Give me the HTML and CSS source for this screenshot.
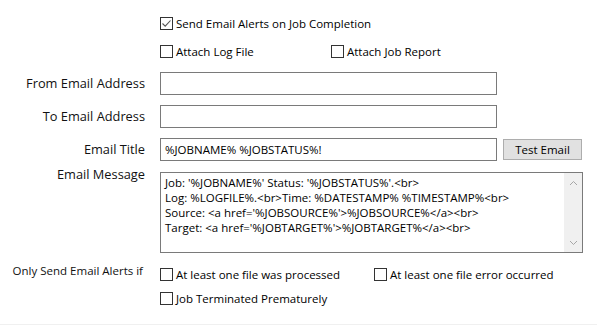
FILE: index.html
```html
<html>
<head>
  <meta charset="UTF-8">
  <link rel="stylesheet" href="styles.css">
</head>
<body>
<div id="panel">
  <div class="row r_send">
    <div class="label"></div>
    <div class="check"><span class="box"><svg width="11" height="11" viewBox="0 0 11 11"><path d="M1.5 5.5 L4.2 8.2 L9.5 2.5" fill="none" stroke="#555555" stroke-width="1.1"/></svg></span>Send Email Alerts on Job Completion</div>
  </div>

  <div class="row r_attach">
    <div class="label"></div>
    <div class="check w_log"><span class="box"></span>Attach Log File</div>
    <div class="check"><span class="box"></span>Attach Job Report</div>
  </div>

  <div class="row r_from">
    <div class="label">From Email Address</div>
    <div class="field"></div>
  </div>

  <div class="row r_to">
    <div class="label">To Email Address</div>
    <div class="field"></div>
  </div>

  <div class="row r_title">
    <div class="label">Email Title</div>
    <div class="field">%JOBNAME% %JOBSTATUS%!</div>
    <div class="button">Test Email</div>
  </div>

  <div class="row r_message">
    <div class="label">Email Message</div>
    <div class="memo">
      <div class="memo_text">
        <div>Job: '%JOBNAME%' Status: '%JOBSTATUS%'.&lt;br&gt;</div>
        <div>Log: %LOGFILE%.&lt;br&gt;Time: %DATESTAMP% %TIMESTAMP%&lt;br&gt;</div>
        <div>Source: &lt;a href='%JOBSOURCE%'&gt;%JOBSOURCE%&lt;/a&gt;&lt;br&gt;</div>
        <div>Target: &lt;a href='%JOBTARGET%'&gt;%JOBTARGET%&lt;/a&gt;&lt;br&gt;</div>
      </div>
      <div class="scrollbar">
        <svg width="9" height="6" viewBox="0 0 9 6"><path d="M1 5 L4.5 1.5 L8 5" fill="none" stroke="#a6a6a6" stroke-width="1"/></svg>
        <svg width="9" height="6" viewBox="0 0 9 6"><path d="M1 1 L4.5 4.5 L8 1" fill="none" stroke="#a6a6a6" stroke-width="1"/></svg>
      </div>
    </div>
  </div>

  <div class="row r_only">
    <div class="label small">Only Send Email Alerts if</div>
    <div class="check w_proc"><span class="box"></span>At least one file was processed</div>
    <div class="check"><span class="box"></span>At least one file error occurred</div>
  </div>

  <div class="row r_term">
    <div class="label"></div>
    <div class="check"><span class="box"></span>Job Terminated Prematurely</div>
  </div>
</div>
</body>
</html>
```

FILE: styles.css
```css
* {
    box-sizing: border-box;
    margin: 0;
    padding: 0;
}

body, html {
    width: 100%;
    height: 100%;
    background: #ffffff;
    color: #000000;
    font-family: 'Open Sans', sans-serif;
    font-size: 11.5px;
}

#panel {
    height: 325px;
    padding-top: 12px;
    border-bottom: 1px solid #f0f0f0;
}

.row {
    display: flex;
    align-items: center;
    height: 22px;
}

.label {
    width: 145px;
    margin-right: 15px;
    text-align: right;
    font-size: 12.8px;
    color: #111111;
    flex-shrink: 0;
}

.label.small {
    font-size: 11.5px;
    margin-right: 17px;
    width: 143px;
}

.check {
    display: flex;
    align-items: center;
    white-space: nowrap;
}

.box {
    width: 13px;
    height: 13px;
    border: 1px solid #333333;
    background: #ffffff;
    margin-right: 3px;
    display: flex;
    align-items: center;
    justify-content: center;
}

.w_log {
    width: 171px;
}

.w_proc {
    width: 214px;
}

.r_attach {
    margin-top: 6px;
}

.r_from {
    margin-top: 10px;
    height: 23px;
}

.r_to, .r_title {
    margin-top: 10px;
    height: 23px;
}

.r_from .label, .r_to .label, .r_title .label {
    margin-top: -2px;
}

.field {
    width: 337px;
    height: 23px;
    border: 1px solid #7a7a7a;
    padding: 2px 4px;
    line-height: 17px;
}

.button {
    width: 79px;
    height: 21px;
    margin-left: 6px;
    background: #e1e1e1;
    border: 1px solid #adadad;
    text-align: center;
    line-height: 19px;
}

.r_message {
    margin-top: 11px;
    height: 81px;
    align-items: flex-start;
}

.r_message .label {
    margin-top: -7px;
    line-height: 18px;
}

.memo {
    width: 423px;
    height: 81px;
    border: 1px solid #7a7a7a;
    display: flex;
}

.memo_text {
    flex: 1;
    padding: 2px 4px;
    line-height: 15px;
    white-space: nowrap;
    overflow: hidden;
}

.scrollbar {
    width: 18px;
    background: #f0f0f0;
    display: flex;
    flex-direction: column;
    justify-content: space-between;
    align-items: center;
    padding: 7px 0 6px;
}

.r_only {
    margin-top: 10px;
    align-items: flex-start;
}

.r_only .label {
    line-height: 16px;
}

.r_only .check {
    margin-top: 4px;
}

.r_term {
    margin-top: 2px;
}
```
